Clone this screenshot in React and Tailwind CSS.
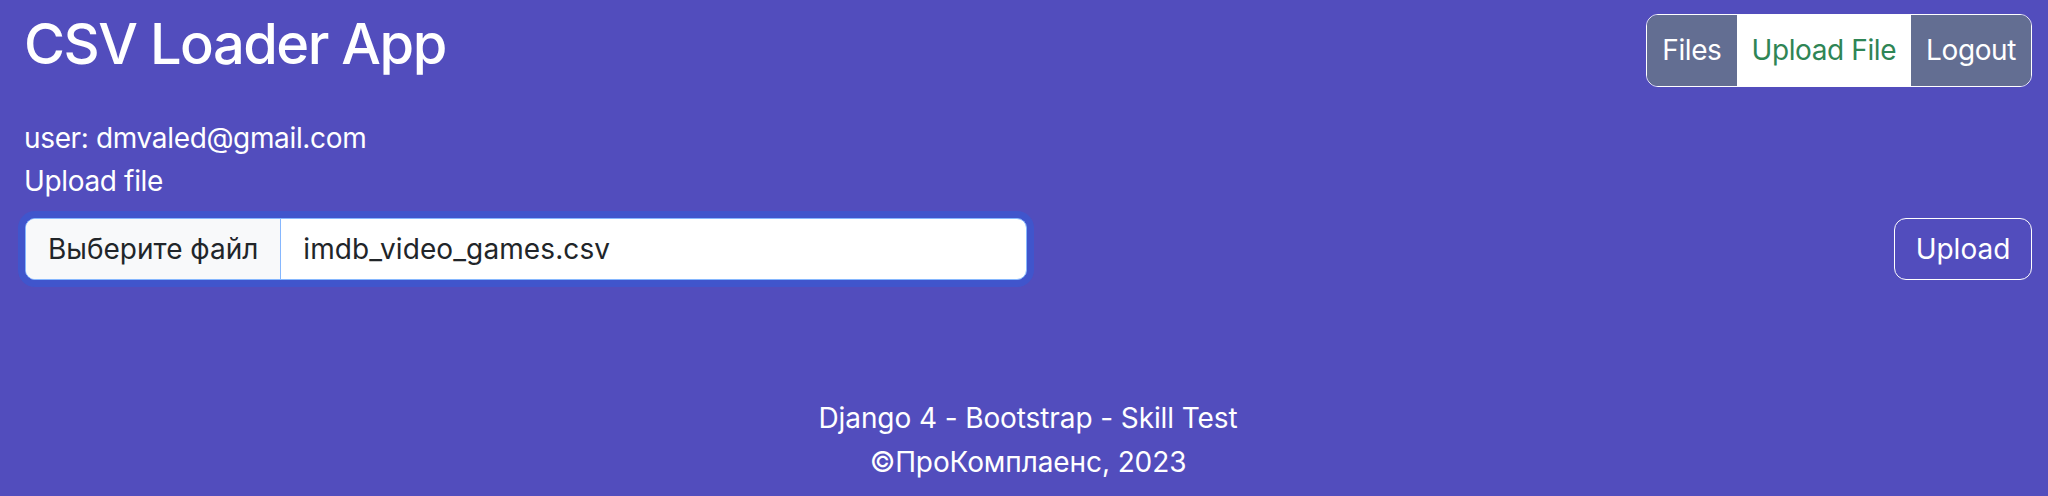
export default function App() {
  const font = { fontFamily: 'Inter, "Noto Sans", sans-serif' };
  return (
    <div
      className="w-full h-[496px] bg-[#524dbd] text-white flex flex-col pl-[24px] pr-[16px] overflow-hidden"
      style={font}
    >
      <div className="flex justify-between items-start">
        <h1 className="mt-[11px] text-[56px] leading-[67px] font-medium tracking-[-1.5px]">
          CSV Loader App
        </h1>
        <div className="mt-[14px] h-[73px] flex rounded-[12px] border-[1.5px] border-white overflow-hidden text-[28px] leading-[43px] tracking-[-0.4px]">
          <div className="flex items-center px-[15px] bg-[#636e92] text-white">Files</div>
          <div className="flex items-center px-[15px] bg-white text-[#2f8555]">Upload File</div>
          <div className="flex items-center px-[15px] bg-[#636e92] text-white">Logout</div>
        </div>
      </div>
      <div className="mt-[30px] text-[28px] leading-[43px] tracking-[-0.35px]">
        <div>user: dmvaled@gmail.com</div>
        <div>Upload file</div>
      </div>
      <div className="mt-[15px] flex justify-between items-center">
        <div className="ml-[1px] w-[1002px] h-[62px] flex items-stretch rounded-[10px] border-[1.5px] border-[#86b7fe] bg-white overflow-hidden shadow-[0_0_0_7px_rgba(13,110,253,0.25)] text-[28px] text-[#212529]">
          <div className="flex items-center px-[22px] bg-[#f8f9fa] border-r-[1.5px] border-[#86b7fe]">
            Выберите файл
          </div>
          <div className="flex items-center pl-[22px] tracking-[0.1px]">imdb_video_games.csv</div>
        </div>
        <button className="h-[62px] w-[138px] rounded-[12px] border-[1.5px] border-white text-[28px] text-white flex items-center justify-center">
          Upload
        </button>
      </div>
      <div className="mt-[116px] text-center text-[28px] leading-[44px] tracking-[-0.1px]">
        <div>Django 4 - Bootstrap - Skill Test</div>
        <div>©ПроКомплаенс, 2023</div>
      </div>
    </div>
  );
}
